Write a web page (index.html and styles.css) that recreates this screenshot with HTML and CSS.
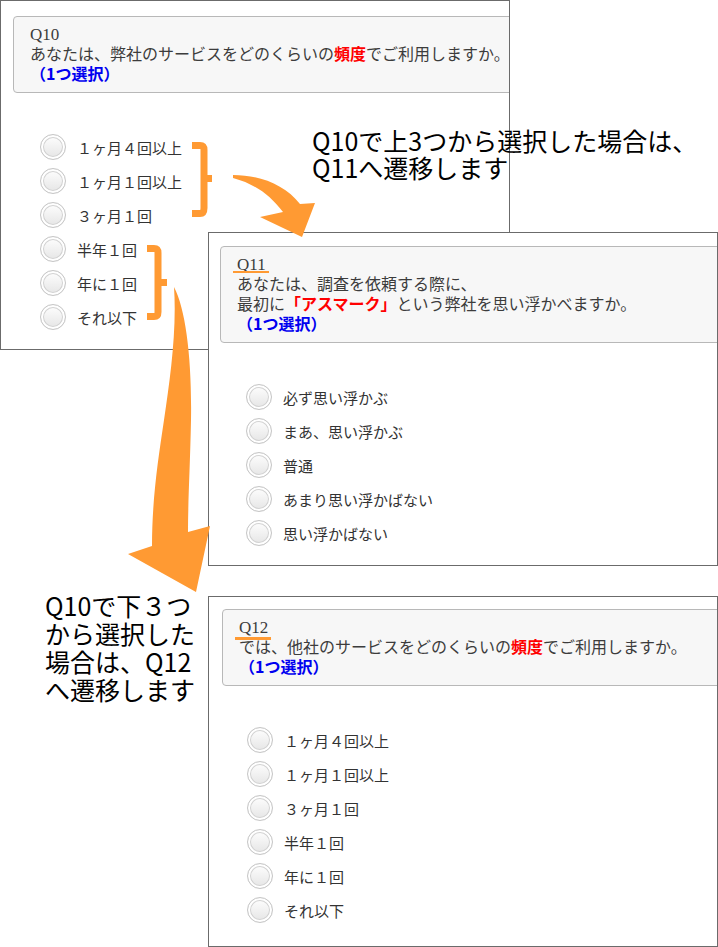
FILE: index.html
```html
<!DOCTYPE html>
<html lang="ja">
<head>
<meta charset="utf-8">
<title>Q10-Q12 遷移</title>
<link rel="stylesheet" href="styles.css">
</head>
<body>
<div class="canvas">

  <section class="panel panel-q10">
    <div class="qhead">
      <div class="qline"><span class="qno">Q10</span></div>
      <div>あなたは、弊社のサービスをどのくらいの<b class="em">頻度</b>でご利用しますか。</div>
      <div class="note">（1つ選択）</div>
    </div>
    <ul class="opts opts-q10">
      <li><span class="radio"></span>１ヶ月４回以上</li>
      <li><span class="radio"></span>１ヶ月１回以上</li>
      <li><span class="radio"></span>３ヶ月１回</li>
      <li><span class="radio"></span>半年１回</li>
      <li><span class="radio"></span>年に１回</li>
      <li><span class="radio"></span>それ以下</li>
    </ul>
  </section>

  <section class="panel panel-q11">
    <div class="qhead">
      <div class="qline"><span class="qno qno-mark qno-mark-11">Q11</span></div>
      <div>あなたは、調査を依頼する際に、</div>
      <div>最初に<b class="em">「アスマーク」</b>という弊社を思い浮かべますか。</div>
      <div class="note">（1つ選択）</div>
    </div>
    <ul class="opts opts-q11">
      <li><span class="radio"></span>必ず思い浮かぶ</li>
      <li><span class="radio"></span>まあ、思い浮かぶ</li>
      <li><span class="radio"></span>普通</li>
      <li><span class="radio"></span>あまり思い浮かばない</li>
      <li><span class="radio"></span>思い浮かばない</li>
    </ul>
  </section>

  <section class="panel panel-q12">
    <div class="qhead">
      <div class="qline"><span class="qno qno-mark qno-mark-12">Q12</span></div>
      <div>では、他社のサービスをどのくらいの<b class="em">頻度</b>でご利用しますか。</div>
      <div class="note">（1つ選択）</div>
    </div>
    <ul class="opts opts-q12">
      <li><span class="radio"></span>１ヶ月４回以上</li>
      <li><span class="radio"></span>１ヶ月１回以上</li>
      <li><span class="radio"></span>３ヶ月１回</li>
      <li><span class="radio"></span>半年１回</li>
      <li><span class="radio"></span>年に１回</li>
      <li><span class="radio"></span>それ以下</li>
    </ul>
  </section>

  <svg class="marks" width="718" height="947" viewBox="0 0 718 947" aria-hidden="true">
    <g fill="none" stroke="#ff9a33" stroke-width="7">
      <path d="M192,145.5 H200 Q204,145.5 204,150 V208 Q204,213.5 200,213.5 H192"/>
      <path d="M204,178.5 H212"/>
      <path d="M147,248.5 H154 Q158,248.5 158,253 V312 Q158,316.5 154,316.5 H147"/>
      <path d="M158,282.5 H167"/>
    </g>
    <g fill="#ff9a33">
      <path d="M233,175 C260,175 285,185 300,204 L315,203 L302,237 L260,217 L283,212 C270,195 255,184 233,178 Z"/>
      <path d="M174,287 C186,310 192,360 191,420 C190,470 188,500 188,532 L210,526 L196,592 L128,554 L152,546 C152,500 158,460 164,420 C170,380 177,330 174,287 Z"/>
    </g>
  </svg>

  <p class="callout callout-right">Q10で上3つから選択した場合は、<br>Q11へ遷移します</p>
  <p class="callout callout-left">Q10で下３つ<br>から選択した<br>場合は、Q12<br>へ遷移します</p>

</div>
</body>
</html>
```

FILE: styles.css
```css
* {
  box-sizing: border-box;
}

html,
body {
  margin: 0;
  padding: 0;
}

body {
  width: 718px;
  height: 947px;
  background: #fff;
  font-family: "Noto Sans CJK JP", sans-serif;
  overflow: hidden;
}

.canvas {
  position: relative;
  width: 718px;
  height: 947px;
}

/* screenshot windows placed on the canvas */
.panel {
  position: absolute;
  background: #fff;
  border: 1px solid #6b6b6b;
  overflow: hidden;
}

.panel-q10 {
  left: 0;
  top: 0;
  width: 510px;
  height: 350px;
  padding: 15px 0 0 12px;
  z-index: 1;
}

.panel-q11 {
  left: 208px;
  top: 232px;
  width: 510px;
  height: 334px;
  padding: 13px 0 0 11px;
  z-index: 2;
}

.panel-q12 {
  left: 208px;
  top: 596px;
  width: 510px;
  height: 351px;
  padding: 12px 0 0 13px;
  z-index: 3;
}

.qhead {
  width: 620px;
  background: #f7f7f7;
  border: 1px solid #b8b8b8;
  border-radius: 4px;
  padding: 6px 16px 9px;
  font-size: 16px;
  line-height: 20px;
  color: #3c3c3c;
  white-space: nowrap;
}

.qline {
  height: 20px;
}

.qno {
  font-family: "Liberation Serif", serif;
  font-size: 17px;
  line-height: 20px;
  position: relative;
}

.qno-mark::after {
  content: "";
  position: absolute;
  left: -4px;
  right: -3px;
  height: 2px;
  background: #ff9a33;
}

.qno-mark-11::after {
  bottom: 1px;
}

.qno-mark-12::after {
  bottom: -3px;
  height: 3px;
}

.em {
  color: #ff0000;
  font-weight: bold;
}

.note {
  color: #0000f0;
  font-weight: bold;
}

.opts {
  list-style: none;
  margin: 37px 0 0;
  padding: 0 0 0 27px;
}

.opts-q11 {
  padding-left: 26px;
}

.opts-q12 {
  padding-left: 25px;
}

.opts li {
  display: flex;
  align-items: center;
  gap: 11px;
  height: 34px;
  font-size: 15px;
  color: #333;
}

.radio {
  flex: none;
  width: 26px;
  height: 26px;
  border-radius: 50%;
  border: 1px solid #c6c6c6;
  background: linear-gradient(#ffffff, #e4e4e4);
  box-shadow: inset 0 0 0 2px #fff, inset 0 0 0 3px #d2d2d2;
}

/* annotations */
.marks {
  position: absolute;
  left: 0;
  top: 0;
  z-index: 5;
}

.callout {
  position: absolute;
  margin: 0;
  font-size: 25px;
  line-height: 27px;
  color: #000;
  white-space: nowrap;
  z-index: 10;
}

.callout-right {
  left: 312px;
  top: 127px;
}

.callout-left {
  left: 45px;
  top: 591px;
  line-height: 28px;
}
```
